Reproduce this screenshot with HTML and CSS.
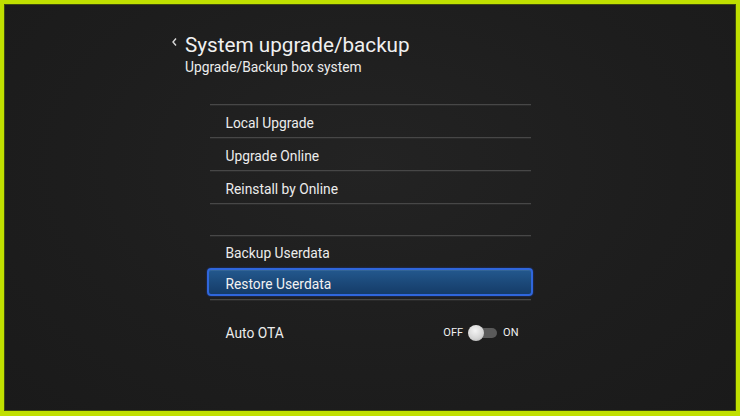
FILE: index.html
```html
<!DOCTYPE html>
<html>
<head>
<meta charset="utf-8">
<link rel="stylesheet" href="styles.css">
</head>
<body>
<div class="frame">
  <header class="header">
    <div class="title-row">
      <svg class="back" width="8" height="10" viewBox="0 0 8 10"><polyline points="6,1.5 3,5 6,8.5" fill="none" stroke="#d8d8d8" stroke-width="1.4"/></svg>
      <h1 class="title">System upgrade/backup</h1>
    </div>
    <p class="subtitle">Upgrade/Backup box system</p>
  </header>
  <div class="menu">
    <div class="row row-a">Local Upgrade</div>
    <div class="row row-a">Upgrade Online</div>
    <div class="row row-a">Reinstall by Online</div>
    <div class="row row-b row-empty"></div>
    <div class="row row-b">Backup Userdata</div>
    <div class="row row-b row-selected"><div class="selected-box">Restore Userdata</div></div>
    <div class="row row-ota">
      <span>Auto OTA</span>
      <div class="switch">
        <span class="sw-label">OFF</span>
        <span class="track"><span class="knob"></span></span>
        <span class="sw-label">ON</span>
      </div>
    </div>
  </div>
</div>
</body>
</html>
```
FILE: styles.css
```css
* { box-sizing: border-box; }
html, body { margin: 0; padding: 0; }
body {
  width: 740px;
  height: 416px;
  font-family: Roboto, "Noto Sans", sans-serif;
  background: #c0e000;
}
.frame {
  width: 740px;
  height: 416px;
  border-style: solid;
  border-color: #c0e000;
  border-width: 4px 4px 5px 4px;
  background: radial-gradient(ellipse at 50% 40%, #232323 0%, #1d1d1d 60%, #1a1a1a 100%);
  box-shadow: inset 0 0 0 1px #3e4a10;
  display: flex;
  flex-direction: column;
}
.header {
  padding: 29px 0 0 166px;
}
.title-row {
  display: flex;
  align-items: center;
}
.back {
  display: block;
  margin: -6px 7px 0 0;
}
.title {
  margin: 0;
  font-size: 20.7px;
  line-height: 24px;
  font-weight: 400;
  color: #f0f0f0;
}
.subtitle {
  margin: 2px 0 0 15px;
  font-size: 13.8px;
  line-height: 16px;
  color: #ececec;
}
.menu {
  width: 321px;
  margin: 29px auto 0;
  display: flex;
  flex-direction: column;
}
.row {
  border-top: 1px solid #474747;
  box-shadow: inset 0 1px 0 #2a2a2a;
  display: flex;
  align-items: center;
  padding: 4px 0 0 16px;
  font-size: 13.8px;
  line-height: 16px;
  color: #ececec;
}
.row-a { height: 33px; }
.row-b { height: 32px; padding-top: 3px; }
.row-selected {
  padding: 0;
  align-items: flex-start;
  border-top-color: transparent;
  box-shadow: none;
}
.selected-box {
  flex: 0 0 326px;
  width: 326px;
  height: 28px;
  margin: 0 0 0 -3px;
  padding: 3px 0 0 17px;
  display: flex;
  align-items: center;
  border: 2px solid #2f66dc;
  border-radius: 4px;
  background: linear-gradient(#23588e 0%, #1b4878 55%, #153c69 100%);
  box-shadow: 0 0 2px #1d3ea0, inset 0 1px 0 rgba(255,255,255,0.08);
  color: #f2f2f2;
}
.row-ota {
  height: 66px;
  padding: 0 12px 0 16px;
  justify-content: space-between;
}
.switch {
  display: flex;
  align-items: center;
  gap: 5px;
  font-size: 11px;
}
.sw-label { color: #f0f0f0; }
.track {
  position: relative;
  width: 28px;
  height: 10px;
  border-radius: 5px;
  background: #5a5a5a;
  margin: 0 1px;
}
.knob {
  position: absolute;
  left: -1px;
  top: -3px;
  width: 16px;
  height: 16px;
  border-radius: 50%;
  background: radial-gradient(circle at 45% 35%, #f4f4f4 0%, #d4d4d4 60%, #a8a8a8 100%);
}
```
